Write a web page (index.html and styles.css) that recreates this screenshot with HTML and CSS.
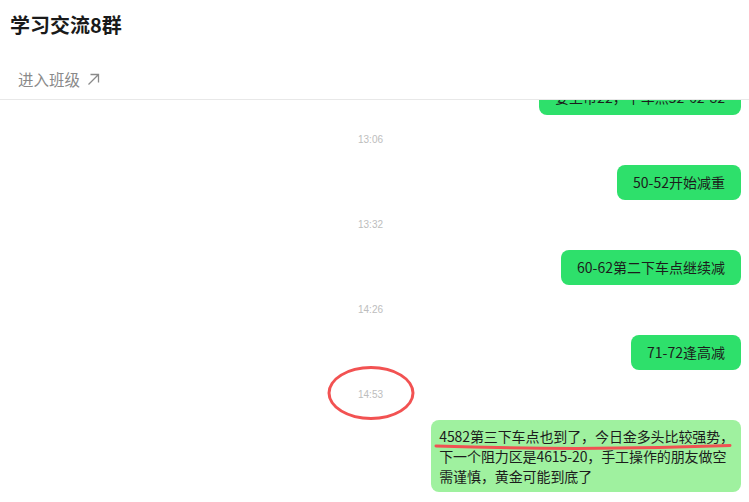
FILE: index.html
```html
<!DOCTYPE html>
<html lang="zh">
<head>
    <meta charset="UTF-8">
    <meta name="viewport" content="width=device-width, initial-scale=1.0">
    <title>学习交流8群</title>
    <link rel="stylesheet" href="styles.css">
</head>
<body>
<div class="header">
    <div class="group-title">学习交流8群</div>
    <div class="link-row">
        <span>进入班级</span>
        <svg class="link-arrow" width="13" height="13" viewBox="0 0 13 13">
            <path d="M1.5 11.5 L11 2 M3.5 1.5 H11.5 V9.5" fill="none" stroke="#8a8a8a" stroke-width="1.3"/>
        </svg>
    </div>
</div>

<div class="chat">
    <!-- older message, cut off by the scroll -->
    <div class="msg">
        <div class="bubble">今日金价反弹力度较大，<br>要上币22，下车点52-62-82</div>
    </div>

    <div class="time">13:06</div>
    <div class="msg">
        <div class="bubble">50-52开始减重</div>
    </div>

    <div class="time">13:32</div>
    <div class="msg">
        <div class="bubble">60-62第二下车点继续减</div>
    </div>

    <div class="time">14:26</div>
    <div class="msg">
        <div class="bubble">71-72逢高减</div>
    </div>

    <div class="time marked"><span>14:53</span></div>
    <div class="msg">
        <div class="bubble long">
            4582第三下车点也到了，今日金多头比较强势，<br>
            下一个阻力区是4615-20，手工操作的朋友做空<br>
            需谨慎，黄金可能到底了
            <svg class="scribble" width="298" height="8" viewBox="0 0 298 8">
                <path d="M2 3 Q150 8 296 2.5" fill="none" stroke="#f05252" stroke-width="3" stroke-linecap="round"/>
            </svg>
        </div>
    </div>
</div>
</body>
</html>
```

FILE: styles.css
```css
body {
    margin: 0;
    padding: 0;
    width: 749px;
    height: 502px;
    overflow: hidden;
    background-color: #fff;
    font-family: "Noto Sans CJK SC", "Liberation Sans", sans-serif;
    color: #1c1c1c;
}

.header {
    border-bottom: 1px solid #e8e8e8;
}

.group-title {
    height: 51px;
    line-height: 50px;
    padding-left: 10px;
    font-size: 20px;
    font-weight: 700;
    color: #1a1a1a;
}

.link-row {
    display: flex;
    align-items: center;
    box-sizing: border-box;
    height: 48px;
    padding: 18px 0 10px 18px;
    line-height: 20px;
    font-size: 15.5px;
    color: #8a8a8a;
}

.link-arrow {
    margin-left: 7px;
}

/* chat list, scrolled to the bottom */
.chat {
    display: flex;
    flex-direction: column;
    justify-content: flex-end;
    box-sizing: border-box;
    height: 402px;
    overflow: hidden;
    padding: 0 8px 10px 0;
}

.msg {
    display: flex;
    justify-content: flex-end;
    flex-shrink: 0;
}

.bubble {
    background-color: #2ee06b;
    border-radius: 8px;
    padding: 8px 16px 8px 16px;
    font-size: 14px;
    line-height: 19px;
    white-space: nowrap;
}

.bubble.long {
    position: relative;
    background-color: #9ff19f;
    padding: 6px 7px 6px 8px;
    line-height: 20px;
    letter-spacing: -0.1px;
}

.scribble {
    position: absolute;
    left: 3px;
    top: 23px;
}

.time {
    flex-shrink: 0;
    margin: 18px 0;
    text-align: center;
    font-family: "Liberation Sans", sans-serif;
    font-size: 10px;
    line-height: 14px;
    color: #bdbdbd;
}

.time.marked span {
    position: relative;
    display: inline-block;
}

.time.marked span::after {
    content: "";
    position: absolute;
    left: 50%;
    top: 50%;
    box-sizing: border-box;
    width: 87px;
    height: 54px;
    margin-top: -2px;
    border: 3.5px solid #f25252;
    border-radius: 50%;
    transform: translate(-50%, -50%);
}
```
